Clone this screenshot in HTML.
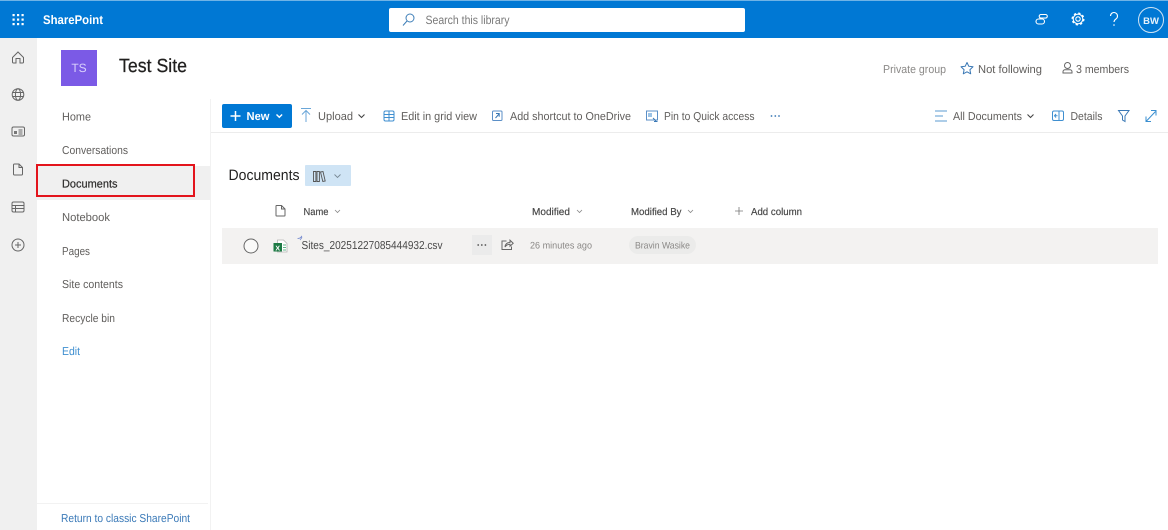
<!DOCTYPE html>
<html><head><meta charset="utf-8"><title>SharePoint</title>
<style>
html,body{margin:0;padding:0;background:#fff;width:1168px;height:530px;overflow:hidden}
svg{display:block;filter:blur(.35px)}
text{font-family:"Liberation Sans",sans-serif;font-size:11.5px;fill:#605e5c;text-rendering:geometricPrecision}
.i{fill:none;stroke:#69797e;stroke-width:1}
.b{fill:none;stroke:#3f8fd0;stroke-width:1}
.w{fill:none;stroke:#fff;stroke-width:1.1}
.g{fill:none;stroke:#666;stroke-width:1}
</style></head><body>
<svg width="1168" height="530" viewBox="0 0 1168 530" xmlns="http://www.w3.org/2000/svg">
<rect width="1168" height="530" fill="#fff"/>
<!-- top bar -->
<rect y="0" width="1168" height="38" fill="#0078d4"/>
<rect y="0" width="1168" height="1" fill="#6fb3e6"/>
<g fill="#fff">
<rect x="12.500" y="14" width="2.200" height="2.200"/><rect x="17" y="14" width="2.200" height="2.200"/><rect x="21.500" y="14" width="2.200" height="2.200"/>
<rect x="12.500" y="18.500" width="2.200" height="2.200"/><rect x="17" y="18.500" width="2.200" height="2.200"/><rect x="21.500" y="18.500" width="2.200" height="2.200"/>
<rect x="12.500" y="23" width="2.200" height="2.200"/><rect x="17" y="23" width="2.200" height="2.200"/><rect x="21.500" y="23" width="2.200" height="2.200"/>
</g>
<text x="43" y="24" textLength="60" lengthAdjust="spacingAndGlyphs" style="font-size:12.500px;font-weight:bold;fill:#fff">SharePoint</text>
<rect x="389" y="8" width="356" height="24" rx="2" fill="#fff"/>
<circle cx="410" cy="18" r="4" fill="none" stroke="#3f7fb8" stroke-width="1"/><path d="M407 21 L403 25.500" fill="none" stroke="#3f7fb8" stroke-width="1"/>
<text x="425.500" y="24" textLength="84" lengthAdjust="spacingAndGlyphs" style="font-size:12px;fill:#7a7a7a">Search this library</text>
<!-- header right icons -->
<path class="w" d="M1041 14.500h4.500a1.800 1.800 0 0 1 0 3.600h-4.500a1.800 1.800 0 0 1 0-3.600zM1038.500 19h3.500a2.500 2.500 0 0 1 0 5h-3.500a2.500 2.500 0 0 1 0-5zM1040 19v-1.500"/>
<circle class="w" cx="1078" cy="19" r="2.200"/><circle class="w" cx="1078" cy="19" r="4.800"/>
<circle cx="1078" cy="19" r="5.800" fill="none" stroke="#fff" stroke-width="1.400" stroke-dasharray="2.280 2.280"/>
<path class="w" d="M1110.500 16a3.500 3.500 0 1 1 5.500 2.900c-1.300.9-2 1.500-2 3.100"/><circle cx="1114" cy="25" r=".8" fill="#fff"/>
<circle cx="1151" cy="20" r="12.500" fill="none" stroke="#cfe4f5" stroke-width="1"/>
<text x="1151" y="24" text-anchor="middle" style="font-size:9.500px;font-weight:bold;fill:#e6f2fb">BW</text>
<!-- left rail -->
<rect y="38" width="37" height="492" fill="#f0f0f0"/>
<path class="g" d="M12.500 57.500L18 52l5.500 5.500v4.500a1 1 0 0 1-1 1h-2.500v-4.500h-4V63h-2.500a1 1 0 0 1-1-1z"/>
<circle class="g" cx="18" cy="94.500" r="5.800"/><ellipse class="g" cx="18" cy="94.500" rx="2.600" ry="5.800"/><path class="g" d="M12.500 92.500h11M12.500 96.500h11"/>
<rect class="g" x="12" y="127" width="12.500" height="9" rx="1.500"/><rect x="14" y="131" width="3" height="3" fill="#777"/><path class="g" d="M18.500 130h4M18.500 132h4M18.500 134h4"/>
<path class="g" d="M14.500 164h4.500l3.500 3.500V174a1 1 0 0 1-1 1h-7a1 1 0 0 1-1-1v-9a1 1 0 0 1 1-1zM19 164v3.500h3.500"/>
<rect class="g" x="12" y="202" width="12" height="10" rx="1.500"/><path class="g" d="M12 205.500h12M12 208.500h12M15.500 205.500v6.500"/>
<circle class="g" cx="18" cy="245" r="6"/><path class="g" d="M18 242v6M15 245h6"/>
<!-- site header -->
<rect x="61" y="50" width="36" height="36" fill="#7b5ae6"/>
<text x="79" y="72" text-anchor="middle" style="font-size:12px;fill:#d9d0fb">TS</text>
<text x="119" y="72" textLength="68" lengthAdjust="spacingAndGlyphs" style="font-size:19px;fill:#201f1e;stroke:#201f1e;stroke-width:.25">Test Site</text>
<text x="883" y="73" textLength="63" lengthAdjust="spacingAndGlyphs" style="fill:#8a8886">Private group</text>
<path d="M967 62.500l1.800 3.800 4.200.5-3.100 2.900.8 4.100-3.700-2-3.700 2 .8-4.100-3.100-2.900 4.200-.5z" class="b" stroke-linejoin="round" style="stroke:#3a78b5"/>
<text x="978" y="73" textLength="64" lengthAdjust="spacingAndGlyphs">Not following</text>
<circle class="g" cx="1067.500" cy="65.500" r="3"/><path class="g" d="M1063 73v-1.200a2 2 0 0 1 2-2h5a2 2 0 0 1 2 2V73z"/>
<text x="1076" y="73" textLength="53" lengthAdjust="spacingAndGlyphs">3 members</text>
<!-- nav -->
<rect x="37" y="166" width="173" height="34" fill="#f0f0f0"/>
<rect x="210" y="99" width="1" height="431" fill="#f2f2f2"/>
<text x="62" y="120.500" textLength="29" lengthAdjust="spacingAndGlyphs">Home</text>
<text x="62" y="154" textLength="66" lengthAdjust="spacingAndGlyphs">Conversations</text>
<text x="62" y="187.500" textLength="55.500" lengthAdjust="spacingAndGlyphs" style="fill:#2d2c2b;stroke:#2d2c2b;stroke-width:.2">Documents</text>
<text x="62" y="221" textLength="48" lengthAdjust="spacingAndGlyphs">Notebook</text>
<text x="62" y="255" textLength="28" lengthAdjust="spacingAndGlyphs">Pages</text>
<text x="62" y="288" textLength="61" lengthAdjust="spacingAndGlyphs">Site contents</text>
<text x="62" y="322" textLength="53" lengthAdjust="spacingAndGlyphs">Recycle bin</text>
<text x="62" y="355" textLength="18" lengthAdjust="spacingAndGlyphs" style="fill:#3f8fd0">Edit</text>
<rect x="37" y="503" width="171" height="1" fill="#f2f2f2"/>
<text x="61" y="522" textLength="129" lengthAdjust="spacingAndGlyphs" style="fill:#3b7ab8">Return to classic SharePoint</text>
<rect x="37" y="165" width="157" height="31" fill="none" stroke="#e3141c" stroke-width="2"/>
<!-- command bar -->
<rect x="211" y="132" width="957" height="1" fill="#ececec"/>
<rect x="222" y="104" width="70" height="24" rx="2" fill="#0078d4"/>
<path d="M235.500 111v10M230.500 116h10" stroke="#fff" stroke-width="1.500" fill="none"/>
<text x="246.500" y="120" textLength="23" lengthAdjust="spacingAndGlyphs" style="fill:#fff;font-weight:bold">New</text>
<path d="M276.500 114.500l2.800 2.800 2.800-2.800" stroke="#fff" stroke-width="1.400" fill="none"/>
<path class="b" d="M301 108.500h10M306 122v-11M302 114.500l4-4 4 4" style="stroke:#6aa6d8"/>
<text x="318" y="120" textLength="35" lengthAdjust="spacingAndGlyphs">Upload</text>
<path d="M358.500 114.500l3 3 3-3" stroke="#444" stroke-width="1.100" fill="none"/>
<rect class="b" x="384" y="111" width="10" height="10" rx="1.500"/><path class="b" d="M384 114.500h10M384 117.500h10M389 111v10"/>
<text x="401" y="120" textLength="76" lengthAdjust="spacingAndGlyphs">Edit in grid view</text>
<rect class="b" x="492.500" y="111" width="9.500" height="9.500" rx="1" style="stroke:#5b8fc7"/><path class="b" d="M495.500 118l3.500-4M496 113.500h3.200v3.200" style="stroke:#3a78b5"/>
<text x="510" y="120" textLength="121" lengthAdjust="spacingAndGlyphs">Add shortcut to OneDrive</text>
<rect class="b" x="646.500" y="111" width="11" height="9" style="stroke:#5b8fc7"/><rect x="648" y="113" width="4" height="4" fill="#9cc3e6"/><path class="b" d="M653 118l3 3M654 121.500h3.500" style="stroke:#3a78b5"/>
<text x="664" y="120" textLength="90.500" lengthAdjust="spacingAndGlyphs">Pin to Quick access</text>
<g fill="#3a78b5"><circle cx="771.500" cy="116" r=".9"/><circle cx="775.300" cy="116" r=".9"/><circle cx="779" cy="116" r=".9"/></g>
<path class="b" d="M935 111h12M935 116h8M935 121h12" style="stroke:#5b9bd0"/>
<text x="953" y="120" textLength="69" lengthAdjust="spacingAndGlyphs">All Documents</text>
<path d="M1027.500 114.500l3 3 3-3" stroke="#444" stroke-width="1.100" fill="none"/>
<rect class="b" x="1052.500" y="111" width="11" height="9.500" rx="1.500"/><path class="b" d="M1059 111v9.500M1054.500 115.800h3M1056 114l-1.500 1.800 1.500 1.800"/>
<text x="1070.500" y="120" textLength="32" lengthAdjust="spacingAndGlyphs">Details</text>
<path class="b" d="M1118.500 110.500h10.500l-4 5.500v5.500l-2.500-1.500v-4z" style="stroke:#3a78b5"/>
<path class="b" d="M1146 121.500l9.500-10M1151 110.500h5v5M1146 116.500v5h5" style="stroke:#3a8fd0"/>
<!-- documents -->
<text x="228.500" y="180" textLength="71" lengthAdjust="spacingAndGlyphs" style="font-size:15px;fill:#201f1e">Documents</text>
<rect x="305" y="165" width="46" height="21" rx="1" fill="#cfe4f5"/>
<path d="M313.500 171.500h2.400v10h-2.400zM317 171.500h2.400v10H317zM320.500 172l2.500-.5 2.200 9.500-2.400.5z" fill="none" stroke="#555" stroke-width=".9"/>
<path d="M334.500 174.500l3 3 3-3" stroke="#7a8a96" stroke-width=".9" fill="none"/>
<!-- list head -->
<path class="g" d="M276.500 205.500h5l3.500 3.500v6.500a.5.500 0 0 1-.5.5h-8a.5.500 0 0 1-.5-.5v-9.500a.5.500 0 0 1 .5-.5zM281.500 205.500V209h3.500"/>
<text x="303.500" y="215" textLength="25" lengthAdjust="spacingAndGlyphs" style="font-size:10px;fill:#444;stroke:#444;stroke-width:.15">Name</text>
<path d="M335 210l2.500 2.500 2.500-2.500" stroke="#888" stroke-width=".8" fill="none"/>
<text x="532" y="215" textLength="38" lengthAdjust="spacingAndGlyphs" style="font-size:10px;fill:#444;stroke:#444;stroke-width:.15">Modified</text>
<path d="M577 210l2.500 2.500 2.500-2.500" stroke="#888" stroke-width=".8" fill="none"/>
<text x="631" y="215" textLength="50.500" lengthAdjust="spacingAndGlyphs" style="font-size:10px;fill:#444;stroke:#444;stroke-width:.15">Modified By</text>
<path d="M688 210l2.500 2.500 2.500-2.500" stroke="#888" stroke-width=".8" fill="none"/>
<path d="M739 207v8M735 211h8" stroke="#777" stroke-width=".8" fill="none"/>
<text x="751" y="215" textLength="51" lengthAdjust="spacingAndGlyphs" style="font-size:10px;fill:#444;stroke:#444;stroke-width:.15">Add column</text>
<!-- row -->
<rect x="222" y="228" width="936" height="36" fill="#f3f2f1"/>
<circle cx="251" cy="246" r="7" fill="#fff" fill-opacity=".6" stroke="#666" stroke-width="1"/>
<path d="M277.500 240h6l3.500 3.500V252h-9.500z" fill="#fff" stroke="#b5b5b5" stroke-width=".8"/>
<rect x="273.500" y="243" width="8.500" height="8.500" fill="#1d7a45"/>
<text x="277.700" y="250.300" text-anchor="middle" style="font-size:7px;font-weight:bold;fill:#fff">X</text>
<path d="M283 245h3M283 247.500h3M283 250h3" stroke="#62b58a" stroke-width=".9" fill="none"/>
<path d="M297.500 238.500c2 0 3.200-.6 4-2M300 240l1.800-2.200-.2-2" stroke="#7a8fd0" stroke-width=".8" fill="none"/>
<text x="301.500" y="249" textLength="141" lengthAdjust="spacingAndGlyphs" style="fill:#4a4a4a">Sites_20251227085444932.csv</text>
<rect x="472" y="235" width="20" height="20" fill="#ebebeb"/>
<g fill="#555"><circle cx="478.200" cy="245" r=".9"/><circle cx="481.800" cy="245" r=".9"/><circle cx="485.400" cy="245" r=".9"/></g>
<path class="g" d="M506.500 241h-4.500v8.500h9.500v-3M505 247c.3-3 2.300-4.500 5-4.500v-2.300l3.200 3-3.200 3v-2c-2 0-3.800.8-5 2.800z"/>
<text x="530" y="248.500" textLength="62" lengthAdjust="spacingAndGlyphs" style="font-size:9.500px;fill:#8a8886">26 minutes ago</text>
<rect x="629" y="236" width="67" height="18" rx="9" fill="#ebebea"/>
<text x="635" y="248.500" textLength="55" lengthAdjust="spacingAndGlyphs" style="font-size:9.500px;fill:#8a8886">Bravin Wasike</text>
</svg>
</body></html>
